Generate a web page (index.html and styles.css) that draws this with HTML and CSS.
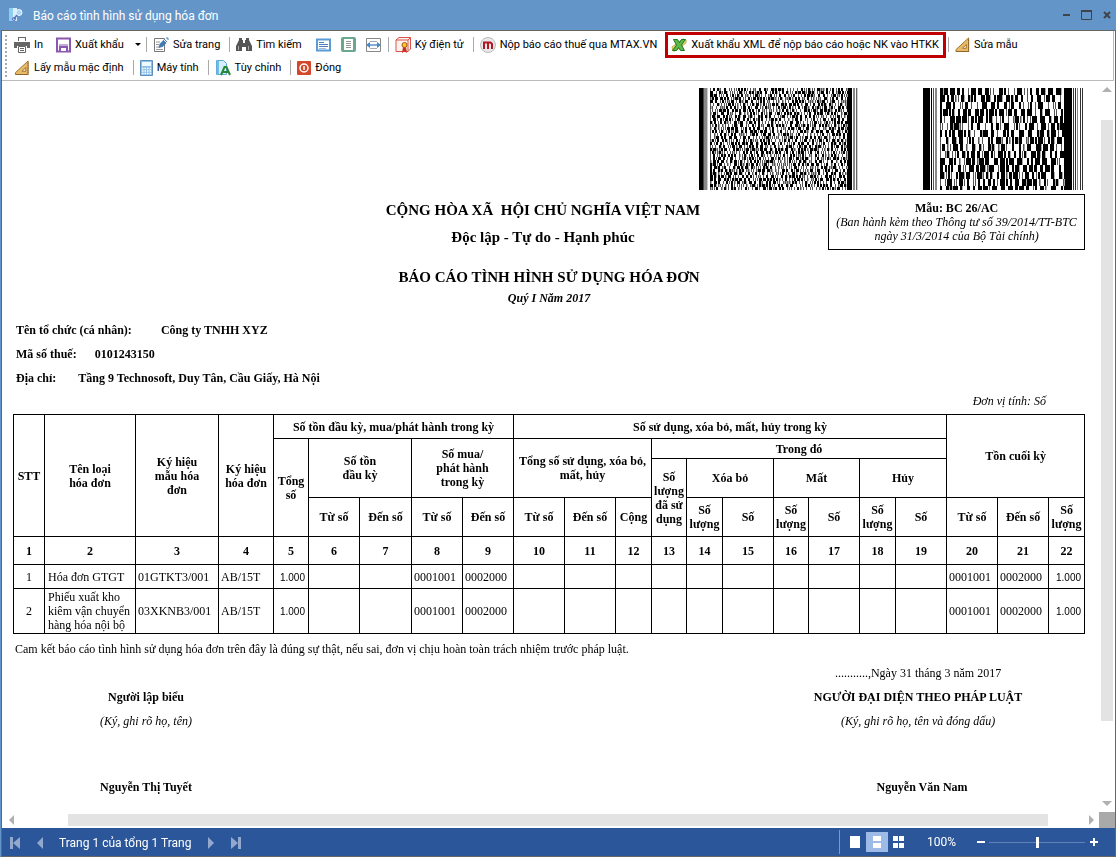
FILE: index.html
```html
<!DOCTYPE html>
<html lang="vi">
<head>
<meta charset="utf-8">
<title>Báo cáo tình hình sử dụng hóa đơn</title>
<link rel="stylesheet" href="styles.css">
</head>
<body>
<svg class="defs" aria-hidden="true">
  <symbol id="ruler" viewBox="0 0 16 16"><path d="M1 13.500 14.500 1v14.500H1z" fill="#e8bb68" stroke="#9a6a22"/><path d="M8 12h4V8z" fill="#fff" stroke="#9a6a22"/><path d="M2 15.500h12.500V2" fill="none" stroke="#7d541b" stroke-dasharray="1 1"/></symbol>
</svg>
<div class="window">
  <header class="titlebar">
    <svg class="app-icon" width="16" height="16" viewBox="0 0 16 16"><path d="M1 1h8v13H1z" fill="#d9effb"/><path d="M1 1h4v13H1z" fill="#8fcdf0"/><circle cx="11" cy="5.500" r="3" fill="#a9d8f5" stroke="#eef8ff"/><path d="m9 8-3 4" stroke="#5a6fc0" stroke-width="1.500"/><circle cx="6" cy="12" r="1.500" fill="none" stroke="#5a6fc0"/></svg>
    <h1 class="caption">Báo cáo tình hình sử dụng hóa đơn</h1>
    <div class="window-buttons">
      <button aria-label="Thu nhỏ"><svg width="7" height="12" viewBox="0 0 7 12"><path d="M0 6h7" stroke="#404448" stroke-width="2"/></svg></button>
      <button aria-label="Phóng to"><svg width="11" height="12" viewBox="0 0 11 12"><path d="M.5 1.500h10v9H.5z" fill="none" stroke="#404448"/><path d="M0 2h11" stroke="#404448" stroke-width="2"/></svg></button>
      <button aria-label="Đóng cửa sổ"><svg width="8" height="12" viewBox="0 0 8 12"><path d="m1 3 6 6m0-6L1 9" stroke="#404448" stroke-width="2"/></svg></button>
    </div>
  </header>

  <div class="client">
    <nav class="toolbar" aria-label="Thanh công cụ">
      <span class="grip"></span>
      <div class="tool-rows">
        <div class="tool-row">
          <button class="tool"><svg width="16" height="16" viewBox="0 0 16 16"><path d="M4 0h8v4H4z" fill="#666"/><path d="M5 1h6v3H5z" fill="#fff"/><path d="M0 5h16v6h-3V9H3v2H0z" fill="#666"/><path d="M4.500 9.500h7v6h-7z" fill="#fff" stroke="#666"/><path d="M6 11.500h4M6 13.500h4" stroke="#666"/></svg>In</button>
          <button class="tool export"><svg width="15" height="16" viewBox="0 0 15 16"><path d="M1 1.500h13v13H1z" fill="#fff" stroke="#8a58b0" stroke-width="2"/><path d="M3 9h9v5H3z" fill="#8a58b0"/><path d="M5 11h5v3H5z" fill="#fff"/><path d="M3 8h9" stroke="#8a58b0"/></svg>Xuất khẩu<span class="caret"></span></button>
          <span class="sep"></span>
          <button class="tool"><svg width="16" height="16" viewBox="0 0 16 16"><path d="M1.500 1.500h10v13h-10z" fill="#fff" stroke="#777"/><path d="M3 5h4M3 7.500h3M3 10h4M3 12.500h7" stroke="#999"/><path d="m5.500 11 1-4 5-5 3 3-5 5z" fill="#447bb3"/><path d="m11 3 3 3" stroke="#fff"/><path d="M13 1h2v2" fill="none" stroke="#447bb3"/></svg>Sửa trang</button>
          <span class="sep"></span>
          <button class="tool"><svg width="16" height="16" viewBox="0 0 16 16"><path d="M3 1h3v2h1v3h2V3h1V1h3v2l3 6v5h-6v-4H6v4H0V9l3-6z" fill="#555"/><path d="M2.500 9v4M12.500 9v4" stroke="#aaa"/></svg>Tìm kiếm</button>
          <button class="view-tool view-first" aria-label="Cả trang"><svg width="15" height="14" viewBox="0 0 15 14"><path d="M1 1.500h13v11H1z" fill="#fff" stroke="#5b9bd5" stroke-width="2"/><path d="M3 4.500h5M3 6.500h9M3 8.500h9" stroke="#4a7ebd"/><path d="M3 10.500h7" stroke="#9dbce0"/></svg></button>
          <button class="view-tool" aria-label="Một trang"><svg width="15" height="15" viewBox="0 0 15 15"><rect x="1" y="1" width="13" height="13" rx="1" fill="#fff" stroke="#69a88c" stroke-width="2"/><path d="M2.500 1v13M12.500 1v13" stroke="#69a88c"/><path d="M5 4.500h5M5 6.500h5M5 8.500h5M5 10.500h5" stroke="#999"/></svg></button>
          <button class="view-tool" aria-label="Rộng trang"><svg width="15" height="14" viewBox="0 0 15 14"><path d="M.5.500h14v13H.5z" fill="#fff" stroke="#888"/><path d="M4 3.500h7M4 10.500h7" stroke="#aaa"/><path d="m0 7 4-3v2h7V4l4 3-4 3V8H4v2z" fill="#4a87c7"/><path d="M4 7h7" stroke="#b8d5f0"/></svg></button>
          <span class="sep"></span>
          <button class="tool"><svg width="16" height="16" viewBox="0 0 16 16"><path d="m1 3 3-2.500h11.500V12L13 14.500H1z" fill="#fff2ed" stroke="#d9544d"/><path d="M1 3h12v11.500M13 3l2.500-2.500" fill="none" stroke="#d9544d"/><path d="m8 10-1 6 2.500-1.500L12 16l-1-6z" fill="#c43224"/><circle cx="9.500" cy="8" r="2.500" fill="#ffc52c" stroke="#a95816"/></svg>Ký điện tử</button>
          <span class="sep"></span>
          <button class="tool"><svg width="16" height="16" viewBox="0 0 16 16"><circle cx="8" cy="8" r="7.500" fill="#e8e8e8" stroke="#bbb"/><path d="M4 12V5.500h6.500l1.500 1.500v5M8 6v6" fill="none" stroke="#b31624" stroke-width="2"/></svg>Nộp báo cáo thuế qua MTAX.VN</button>
          <button class="tool marked"><svg width="16" height="16" viewBox="0 0 16 16"><path d="M2 14 1 10 12 2l3 1v3L4 14z" fill="#eadb83" stroke="#c9ad3d"/><path d="M2.500 2.500h4l2 3 2-3h4l-4 5.500 3 5.500h-4l-2-3-2 3h-4l4-5.500z" fill="#5cb848" stroke="#217621"/></svg>Xuất khẩu XML để nộp báo cáo hoặc NK vào HTKK</button>
          <span class="sep"></span>
          <button class="tool"><svg width="15" height="15"><use href="#ruler"/></svg>Sửa mẫu</button>
        </div>
        <div class="tool-row">
          <button class="tool"><svg width="16" height="15"><use href="#ruler"/></svg>Lấy mẫu mặc định</button>
          <span class="sep"></span>
          <button class="tool"><svg width="13" height="16" viewBox="0 0 13 16"><path d="M.5.500h12v15H.5z" fill="#8fc1e8" stroke="#5b8fc0"/><path d="M2 2h9v4H2z" fill="#eefaff"/><path d="M2 8.500h9M2 11h9M2 13.500h9" stroke="#fff" stroke-width="1.500" stroke-dasharray="1.500 1"/></svg>Máy tính</button>
          <span class="sep"></span>
          <button class="tool"><svg width="16" height="16" viewBox="0 0 16 16"><path d="M1.500.500h7l3 3v11h-10z" fill="#d6effc" stroke="#62aad7"/><path d="M2 1h2v13H2z" fill="#70bce8"/><path d="m6 15 3.500-8h2L15 15m-7-3h6" fill="none" stroke="#278739" stroke-width="2"/></svg>Tùy chỉnh</button>
          <span class="sep"></span>
          <button class="tool"><svg width="14" height="14" viewBox="0 0 14 14"><rect width="14" height="14" rx="1" fill="#d4472b"/><circle cx="7" cy="7" r="4" fill="none" stroke="#fff" stroke-width="1.500"/><path d="M7 5v4" stroke="#fff" stroke-width="1.500"/></svg>Đóng</button>
        </div>
      </div>
    </nav>

    <div class="viewer">
      <main class="report">
        <div class="barcodes">
          <canvas class="barcode" id="code-a" width="160" height="102" aria-label="Mã vạch 1"></canvas>
          <canvas class="barcode" id="code-b" width="160" height="102" aria-label="Mã vạch 2"></canvas>
        </div>
        <div class="heading">
          <div class="motto">
            <p class="nation">CỘNG HÒA XÃ&nbsp; HỘI CHỦ NGHĨA VIỆT NAM</p>
            <p class="creed">Độc lập - Tự do - Hạnh phúc</p>
          </div>
          <div class="form-no"><b>Mẫu: BC 26/AC</b><i>(Ban hành kèm theo Thông tư số 39/2014/TT-BTC ngày 31/3/2014 của Bộ Tài chính)</i></div>
        </div>
        <h2 class="report-title">BÁO CÁO TÌNH HÌNH SỬ DỤNG HÓA ĐƠN</h2>
        <p class="period">Quý I Năm 2017</p>
        <dl class="info">
          <div class="info-row org"><dt>Tên tổ chức (cá nhân):</dt><dd>Công ty TNHH XYZ</dd></div>
          <div class="info-row tax"><dt>Mã số thuế:</dt><dd>0101243150</dd></div>
          <div class="info-row"><dt>Địa chỉ:</dt><dd>Tầng 9 Technosoft, Duy Tân, Cầu Giấy, Hà Nội</dd></div>
        </dl>
        <p class="unit">Đơn vị tính: Số</p>
        <table class="grid">
          <colgroup><col class="c31"><col class="c91"><col class="c83"><col class="c55"><col class="c35"><col class="c51"><col class="c52"><col class="c51"><col class="c51"><col class="c51"><col class="c51"><col class="c36"><col class="c35"><col class="c36"><col class="c51"><col class="c35"><col class="c51"><col class="c36"><col class="c51"><col class="c51"><col class="c51"><col class="c36"></colgroup>
          <thead>
            <tr class="h24"><th rowspan="4">STT</th><th rowspan="4">Tên loại<br>hóa đơn</th><th rowspan="4">Ký hiệu<br>mẫu hóa<br>đơn</th><th rowspan="4">Ký hiệu<br>hóa đơn</th><th colspan="5">Số tồn đầu kỳ, mua/phát hành trong kỳ</th><th colspan="10">Số sử dụng, xóa bỏ, mất, hủy trong kỳ</th><th colspan="3" rowspan="3">Tồn cuối kỳ</th></tr>
            <tr class="h20"><th rowspan="3">Tổng<br>số</th><th colspan="2" rowspan="2">Số tồn<br>đầu kỳ</th><th colspan="2" rowspan="2">Số mua/<br>phát hành<br>trong kỳ</th><th colspan="3" rowspan="2">Tổng số sử dụng, xóa bỏ,<br>mất, hủy</th><th colspan="7">Trong đó</th></tr>
            <tr class="h39"><th rowspan="2">Số<br>lượng<br>đã sử<br>dụng</th><th colspan="2">Xóa bỏ</th><th colspan="2">Mất</th><th colspan="2">Hủy</th></tr>
            <tr class="h39"><th>Từ số</th><th>Đến số</th><th>Từ số</th><th>Đến số</th><th>Từ số</th><th>Đến số</th><th>Cộng</th><th>Số<br>lượng</th><th>Số</th><th>Số<br>lượng</th><th>Số</th><th>Số<br>lượng</th><th>Số</th><th>Từ số</th><th>Đến số</th><th>Số<br>lượng</th></tr>
            <tr class="h28"><th>1</th><th>2</th><th>3</th><th>4</th><th>5</th><th>6</th><th>7</th><th>8</th><th>9</th><th>10</th><th>11</th><th>12</th><th>13</th><th>14</th><th>15</th><th>16</th><th>17</th><th>18</th><th>19</th><th>20</th><th>21</th><th>22</th></tr>
          </thead>
          <tbody>
            <tr class="h24"><td class="mid">1</td><td class="name">Hóa đơn GTGT</td><td>01GTKT3/001</td><td>AB/15T</td><td class="num">1.000</td><td></td><td></td><td>0001001</td><td>0002000</td><td></td><td></td><td></td><td></td><td></td><td></td><td></td><td></td><td></td><td></td><td>0001001</td><td>0002000</td><td class="num">1.000</td></tr>
            <tr class="h45"><td class="mid">2</td><td class="name">Phiếu xuất kho<br>kiêm vận chuyển<br>hàng hóa nội bộ</td><td>03XKNB3/001</td><td>AB/15T</td><td class="num">1.000</td><td></td><td></td><td>0001001</td><td>0002000</td><td></td><td></td><td></td><td></td><td></td><td></td><td></td><td></td><td></td><td></td><td>0001001</td><td>0002000</td><td class="num">1.000</td></tr>
          </tbody>
        </table>
        <p class="pledge">Cam kết báo cáo tình hình sử dụng hóa đơn trên đây là đúng sự thật, nếu sai, đơn vị chịu hoàn toàn trách nhiệm trước pháp luật.</p>
        <div class="signatures">
          <div class="sign"><b>Người lập biểu</b><i>(Ký, ghi rõ họ, tên)</i><b class="signer">Nguyễn Thị Tuyết</b></div>
          <div class="sign sign-legal"><span>...........,Ngày 31 tháng 3 năm 2017</span><b>NGƯỜI ĐẠI DIỆN THEO PHÁP LUẬT</b><i>(Ký, ghi rõ họ, tên và đóng dấu)</i><b class="signer">Nguyễn Văn Nam</b></div>
        </div>
      </main>
      <div class="vscroll"><span class="arrow up"></span><span class="vthumb"></span><span class="arrow down"></span></div>
      <div class="hscroll"><span class="arrow left"></span><span class="hthumb"></span><span class="arrow right"></span></div>
      <div class="corner"></div>
    </div>

    <footer class="status">
      <button class="page-btn" aria-label="Trang đầu"><svg width="10" height="12" viewBox="0 0 10 12"><path d="M0 0h3v12H0zM10 0v12L3 6z" fill="#92a9cd"/></svg></button>
      <button class="page-btn" aria-label="Trang trước"><svg width="6" height="12" viewBox="0 0 6 12"><path d="M6 0v12L0 6z" fill="#92a9cd"/></svg></button>
      <span class="page-text">Trang 1 của tổng 1 Trang</span>
      <button class="page-btn" aria-label="Trang sau"><svg width="6" height="12" viewBox="0 0 6 12"><path d="M0 0v12l6-6z" fill="#92a9cd"/></svg></button>
      <button class="page-btn" aria-label="Trang cuối"><svg width="10" height="12" viewBox="0 0 10 12"><path d="M7 0h3v12H7zM0 0v12l7-6z" fill="#92a9cd"/></svg></button>
      <div class="status-right">
        <button class="mode" aria-label="Từng trang"><svg width="10" height="12" viewBox="0 0 10 12"><path d="M0 0h10v12H0z" fill="#fff"/></svg></button>
        <button class="mode mode-on" aria-label="Liên tục"><svg width="8" height="12" viewBox="0 0 8 12"><path d="M0 0h8v5H0zM0 7h8v5H0z" fill="#fff"/></svg></button>
        <button class="mode" aria-label="Nhiều trang"><svg width="11" height="12" viewBox="0 0 11 12"><path d="M0 0h5v5H0zM6 0h5v5H6zM0 7h5v5H0zM6 7h5v5H6z" fill="#fff"/></svg></button>
        <label class="percent" for="zoom">100%</label>
        <button class="step" aria-label="Thu nhỏ trang"><svg width="8" height="8" viewBox="0 0 8 8"><path d="M0 3h8v2H0z" fill="#fff"/></svg></button>
        <input class="slider" id="zoom" type="range" min="0" max="200" value="100">
        <button class="step" aria-label="Phóng to trang"><svg width="8" height="8" viewBox="0 0 8 8"><path d="M0 3h8v2H0zM3 0h2v8H3z" fill="#fff"/></svg></button>
      </div>
    </footer>
  </div>
</div>
<script src="barcode.js"></script>
</body>
</html>
```
FILE: styles.css
```css
* { box-sizing: border-box; }
body { margin: 0; font-family: Roboto, "Liberation Sans", sans-serif; font-size: 11px; color: #000; }
button { border: 0; padding: 0; background: none; font: inherit; color: inherit; }
svg { display: block; flex: none; }
p, h1, h2, dl, dd { margin: 0; }
.defs { position: absolute; width: 0; height: 0; }

.window { display: flex; flex-direction: column; min-height: 100vh; background: #6495c8; }
.titlebar { display: flex; align-items: center; height: 30px; padding: 0 5px 0 8px; color: #fff; }
.caption { flex: 1; margin-left: 9px; padding-top: 2px; font: 12px/16px Roboto, sans-serif; }
.window-buttons { display: flex; align-items: center; gap: 11px; }

.client { flex: 1; display: flex; flex-direction: column; margin-left: 1px; border: 1px solid #666; background: #fff; }
.toolbar { display: flex; gap: 5px; height: 50px; margin-right: 1px; padding: 2px 0 0 3px; border-right: 1px solid #bbb; border-bottom: 1px solid #bbb; }
.grip { width: 2px; height: 42px; margin-top: 2px; background: repeating-linear-gradient(#aaa 0 2px, #fff 2px 4px); }
.tool-row { display: flex; align-items: center; height: 23px; white-space: nowrap; }
.tool { display: flex; align-items: center; gap: 4px; height: 20px; padding: 0 2px; }
.export { margin-left: 9px; padding-right: 4px; }
.caret { margin-left: 7px; border: 3px solid transparent; border-top-color: #000; border-bottom: 0; }
.sep { width: 1px; height: 15px; margin: 0 4px 0 7px; background: #aaa; }
.export + .sep { margin-left: 1px; }
.view-tool { margin-left: 10px; }
.view-first { margin-left: 12px; }
.marked { margin: 0 0 0 9px; padding: 0 4px 0 3px; outline: 3px solid #c00000; }
.marked + .sep { margin-left: 5px; }

.viewer { flex: 1; display: grid; grid-template-columns: 1fr 16px; grid-template-rows: 1fr 16px; }
.report { padding: 7px 14px 16px 11px; font: 12px/14px "Liberation Serif", serif; }
.barcodes { display: flex; justify-content: flex-end; gap: 64px; padding-right: 2px; }
.barcode { display: block; }
.heading { display: grid; grid-template-columns: 245px 1fr 257px; margin-top: 4px; }
.motto { grid-column: 2; padding-top: 6px; text-align: center; font-weight: bold; white-space: nowrap; }
.nation, .creed { font-size: 15px; line-height: 20px; }
.creed { margin-top: 7px; }
.form-no { display: flex; flex-direction: column; justify-content: center; height: 56px; border: 1px solid #000; text-align: center; }
.report-title { margin-top: 17px; font-size: 15px; line-height: 20px; text-align: center; }
.period { font-style: italic; font-weight: bold; line-height: 22px; text-align: center; }
.info { margin-top: 9px; padding-left: 3px; font-weight: bold; }
.info-row { display: flex; gap: 22px; line-height: 24px; }
.info-row.org { gap: 29px; }
.info-row.tax { gap: 18px; }
.unit { padding: 3px 39px 5px 0; line-height: 16px; font-style: italic; text-align: right; }

.grid { width: 100%; table-layout: fixed; border-collapse: collapse; }
.grid th, .grid td { padding: 0 2px; border: 1px solid #000; }
.grid th { padding: 0; white-space: nowrap; }
.grid td { white-space: nowrap; }
.grid .name { padding-left: 3px; }
.grid .mid { text-align: center; }
.grid .num { padding: 2px 3px 0 0; text-align: right; font: 10px/14px "Liberation Sans", sans-serif; }
.h20 { height: 20px; }
.h24 { height: 24px; }
.h28 { height: 28px; }
.h39 { height: 39px; }
.h45 { height: 45px; }
.c31 { width: 31px; }
.c35 { width: 35px; }
.c36 { width: 36px; }
.c51 { width: 51px; }
.c52 { width: 52px; }
.c55 { width: 55px; }
.c83 { width: 83px; }
.c91 { width: 91px; }

.pledge { margin: 7px 0 0 2px; line-height: 16px; }
.signatures { display: flex; justify-content: space-between; align-items: flex-end; margin-top: 8px; }
.sign { display: flex; flex-direction: column; gap: 8px; width: 266px; line-height: 16px; text-align: center; }
.sign-legal { width: 334px; }
.signer { margin-top: 42px; }
.sign-legal .signer { padding-left: 8px; }

.arrow { flex: none; width: 0; height: 0; border: 5px solid transparent; }
.up { border-top: 0; border-bottom-color: #b0b0b0; }
.down { border-bottom: 0; border-top-color: #b0b0b0; }
.left { border-left: 0; border-right-color: #b0b0b0; }
.right { border-right: 0; border-left-color: #b0b0b0; }
.vscroll { display: flex; flex-direction: column; align-items: center; padding: 6px 0; }
.vthumb { flex: 1; width: 12px; margin: 28px 0 80px; background: #e3e3e3; }
.hscroll { display: flex; align-items: center; padding: 0 5px 0 7px; }
.hthumb { flex: 1; height: 12px; margin: 0 41px 0 54px; background: #e3e3e3; }
.corner { background: #a9a9a9; }

.status { display: flex; align-items: center; height: 28px; padding: 2px 17px 0 8px; background: #2b579a; color: #fff; font: 12px/16px Roboto, sans-serif; }
.page-btn + .page-btn { margin-left: 17px; }
.page-text { margin: 0 17px 0 16px; }
.status-right { display: flex; align-items: center; align-self: stretch; margin: 0 0 2px auto; padding-left: 4px; border-left: 1px solid #7e98c2; }
.mode { display: flex; align-items: center; justify-content: center; width: 22px; height: 20px; }
.mode-on { background: #9ebae6; }
.percent { margin: 0 21px 0 17px; }
.slider { width: 96px; height: 12px; margin: 0 5px 0 4px; appearance: none; background: linear-gradient(#5f83b9, #5f83b9) center / 100% 1px no-repeat; }
.slider::-webkit-slider-thumb { appearance: none; width: 3px; height: 11px; background: #fff; }
```
FILE: barcode.js
```js
function drawBarcode(id, opts) {
  const ctx = document.getElementById(id).getContext('2d');
  const { width, height } = ctx.canvas;
  let seed = opts.seed;
  const random = () => (seed = (seed * 16807) % 2147483647) / 2147483647;
  const pick = () => opts.widths[Math.floor(random() * opts.widths.length)];
  ctx.fillStyle = '#fff';
  ctx.fillRect(0, 0, width, height);
  opts.bars.forEach(([x, w, color]) => {
    ctx.fillStyle = color;
    ctx.fillRect(x, 0, w, height);
  });
  for (let y = 0; y < height; y += opts.row) {
    for (let x = opts.from; x < opts.to;) {
      const bar = Math.min(opts.to - x, pick());
      ctx.fillStyle = bar === 1 ? '#555' : '#000';
      ctx.fillRect(x, y, bar, opts.row);
      x += bar;
      if (random() < opts.grey) {
        ctx.fillStyle = '#aaa';
        ctx.fillRect(x, y, 1, opts.row);
      }
      x += pick();
    }
  }
}
drawBarcode('code-a', {
  seed: 4711, row: 3, from: 11, to: 148, widths: [1, 1, 1, 2, 2, 3], grey: 0.3,
  bars: [[0, 4, '#000'], [4, 1, '#444'], [5, 3, '#888'], [8, 1, '#ccc'], [148, 5, '#000'], [154, 2, '#888'], [157, 1, '#666'], [158, 1, '#ccc']]
});
drawBarcode('code-b', {
  seed: 90210, row: 7, from: 17, to: 141, widths: [1, 1, 2, 2, 3, 4, 5], grey: 0.2,
  bars: [[0, 7, '#000'], [8, 1, '#000'], [10, 1, '#555'], [12, 2, '#888'], [141, 8, '#000'], [150, 1, '#333'], [152, 1, '#333'], [154, 1, '#888'], [157, 1, '#333'], [159, 1, '#333']]
});
```
